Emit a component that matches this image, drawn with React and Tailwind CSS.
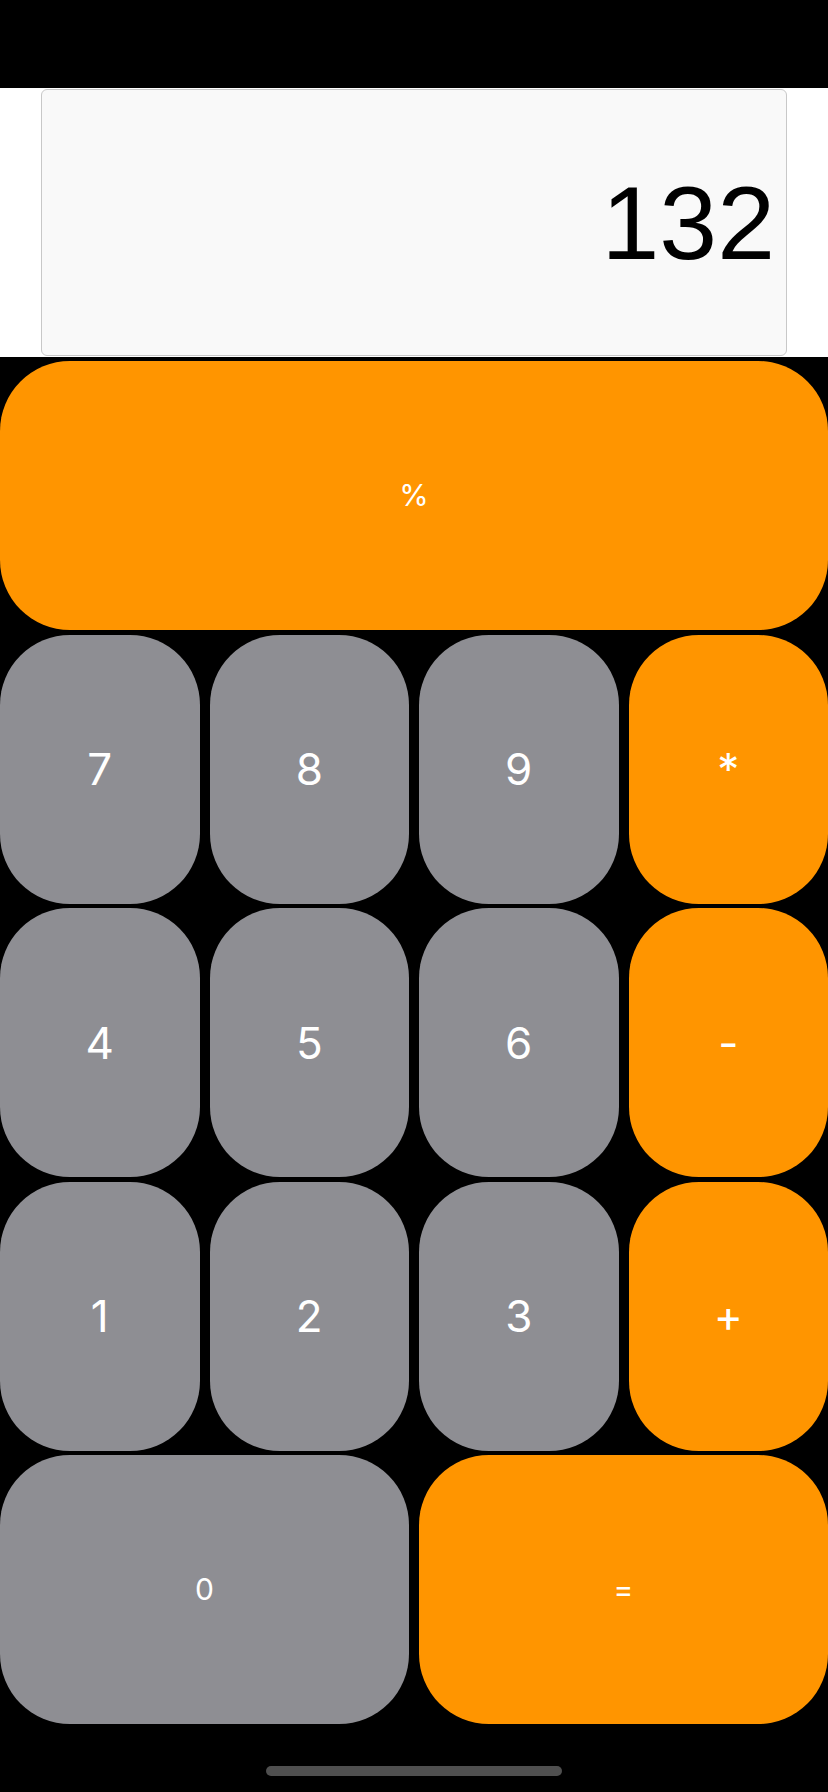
import React from "react";

const btnBase =
  "flex items-center justify-center rounded-[70px] h-[269px] text-white font-normal select-none";
const gray = "bg-[#8e8e93]";
const orange = "bg-[#ff9500]";

function Key({ label, color, big = true, span = "" }) {
  return (
    <div
      className={`${btnBase} ${color} ${span} ${big ? "text-[44px]" : "text-[30px]"}`}
      style={{ fontFamily: "Inter, 'Liberation Sans', sans-serif" }}
    >
      {label}
    </div>
  );
}

export default function App() {
  return (
    <div className="min-h-[1792px] w-[828px] bg-black flex flex-col">
      <div className="h-[88px] bg-black" />
      <div className="h-[269px] bg-white px-[41px] py-[1px]">
        <div
          className="h-full rounded-[6px] border border-[#c8c8c8] bg-[#f9f9f9] flex items-center justify-end pr-[11px]"
          style={{ fontFamily: "'Liberation Sans', Arial, sans-serif" }}
        >
          <span className="text-[104px] leading-none text-black">132</span>
        </div>
      </div>
      <div className="pt-[4px] grid grid-cols-4 gap-x-[10px] gap-y-[4.5px]">
        <Key label="%" color={orange} big={false} span="col-span-4" />
        <Key label="7" color={gray} />
        <Key label="8" color={gray} />
        <Key label="9" color={gray} />
        <Key label="*" color={orange} />
        <Key label="4" color={gray} />
        <Key label="5" color={gray} />
        <Key label="6" color={gray} />
        <Key label="-" color={orange} />
        <Key label="1" color={gray} />
        <Key label="2" color={gray} />
        <Key label="3" color={gray} />
        <Key label="+" color={orange} />
        <Key label="0" color={gray} big={false} span="col-span-2" />
        <Key label="=" color={orange} big={false} span="col-span-2" />
      </div>
      <div className="flex justify-center pt-[42px]">
        <div className="w-[296px] h-[10px] rounded-full bg-[#4f4f4f]" />
      </div>
    </div>
  );
}
